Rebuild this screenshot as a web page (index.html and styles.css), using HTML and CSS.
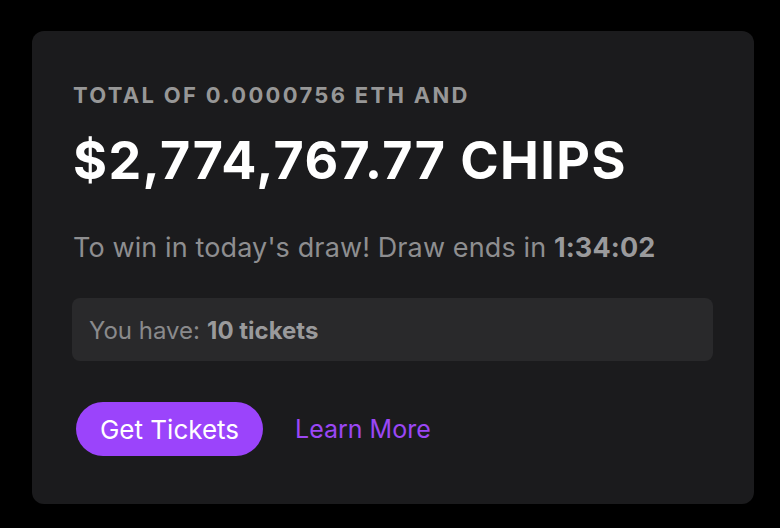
FILE: index.html
```html
<!DOCTYPE html>
<html lang="en">
<head>
    <meta charset="UTF-8">
    <meta name="viewport" content="width=device-width, initial-scale=1.0">
    <title>Daily Draw</title>
    <link rel="stylesheet" href="styles.css">
</head>
<body>
    <div class="card">
        <p class="label">TOTAL OF 0.0000756 ETH AND</p>
        <p class="prize">$2,774,767.77 CHIPS</p>
        <p class="info">To win in today's draw! Draw ends in <b>1:34:02</b></p>
        <div class="tickets">You have: <b>10 tickets</b></div>
        <div class="actions">
            <button class="get-button">Get Tickets</button>
            <a class="learn-link" href="#">Learn More</a>
        </div>
    </div>
</body>
</html>
```

FILE: styles.css
```css
body {
    margin: 0;
    background-color: #000;
    font-family: Inter, "Noto Sans", Arial, sans-serif;
    padding: 31px 0 0 32px;
}
.card {
    box-sizing: border-box;
    width: 722px;
    height: 473px;
    background-color: #1b1b1d;
    border-radius: 12px;
    padding: 53px 41px 0 41px;
}
.label {
    margin: 0;
    font-size: 22px;
    line-height: 1;
    font-weight: 700;
    letter-spacing: 2.3px;
    color: #979797;
}
.prize {
    margin: 29px 0 0 0;
    font-size: 52px;
    line-height: 1;
    font-weight: 700;
    color: #fff;
    letter-spacing: 1.4px;
}
.info {
    margin: 47px 0 0 0;
    font-size: 27px;
    line-height: 1;
    letter-spacing: 0.12px;
    color: #8e8e90;
}
.info b {
    color: #9a9a9c;
}
.tickets {
    box-sizing: border-box;
    margin-top: 37px;
    margin-left: -1px;
    background-color: #29292b;
    border-radius: 8px;
    height: 63px;
    display: flex;
    align-items: center;
    padding: 3px 0 0 17px;
    font-size: 24px;
    line-height: 1;
    color: #8a8a8c;
}
.tickets b {
    margin-left: 7px;
    color: #9a9a9c;
}
.actions {
    margin-top: 41px;
    display: flex;
    align-items: center;
    gap: 32px;
}
.get-button {
    margin-left: 3px;
    background-color: #9b44fb;
    color: #fff;
    border: none;
    height: 54px;
    width: 187px;
    border-radius: 27px;
    font-family: inherit;
    font-size: 26px;
    cursor: pointer;
}
.learn-link {
    color: #9b47f5;
    font-size: 25px;
    text-decoration: none;
}
```
